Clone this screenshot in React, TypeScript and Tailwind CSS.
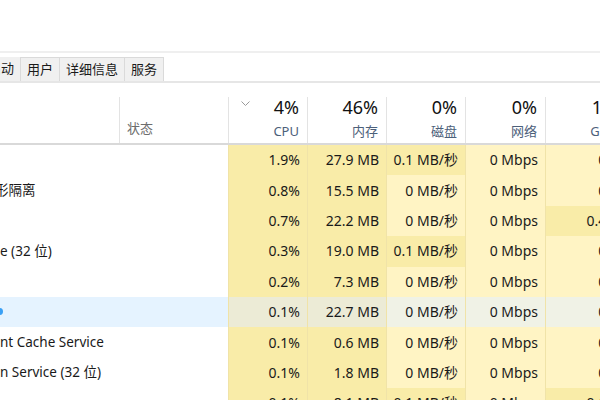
import React from "react";

type Row = {
  name: React.ReactNode;
  cpu: string;
  mem: string;
  disk: string;
  diskHot?: boolean;
  net: string;
  gpu: string;
  gpuHot?: boolean;
  hover?: boolean;
};

const rows: Row[] = [
  { name: "", cpu: "1.9%", mem: "27.9 MB", disk: "0.1 MB/秒", diskHot: true, net: "0 Mbps", gpu: "0%" },
  { name: <span className="-ml-[5px]">形隔离</span>, cpu: "0.8%", mem: "15.5 MB", disk: "0 MB/秒", net: "0 Mbps", gpu: "0%" },
  { name: "", cpu: "0.7%", mem: "22.2 MB", disk: "0 MB/秒", net: "0 Mbps", gpu: "0.4%", gpuHot: true },
  { name: "e (32 位)", cpu: "0.3%", mem: "19.0 MB", disk: "0.1 MB/秒", diskHot: true, net: "0 Mbps", gpu: "0%" },
  { name: "", cpu: "0.2%", mem: "7.3 MB", disk: "0 MB/秒", net: "0 Mbps", gpu: "0%" },
  {
    name: <span className="-ml-[5px] block h-[7px] w-[8px] rounded-full bg-[#3aa0f5]" />,
    cpu: "0.1%",
    mem: "22.7 MB",
    disk: "0 MB/秒",
    net: "0 Mbps",
    gpu: "0%",
    hover: true,
  },
  { name: "nt Cache Service", cpu: "0.1%", mem: "0.6 MB", disk: "0 MB/秒", net: "0 Mbps", gpu: "0%" },
  { name: "n Service (32 位)", cpu: "0.1%", mem: "1.8 MB", disk: "0 MB/秒", net: "0 Mbps", gpu: "0%" },
  { name: "", cpu: "0.1%", mem: "8.1 MB", disk: "0.1 MB/秒", diskHot: true, net: "0 Mbps", gpu: "0.1%", gpuHot: true },
];

const cols = "grid grid-cols-[119px_109px_79px_79px_79px_80px_80px]";
const cell = "flex items-center justify-end pr-[7px] pb-[1px] border-l border-[#f0e3a8]";

function heat(hot: boolean, hover?: boolean) {
  if (hover) return hot ? "bg-[#ecebd6]" : "bg-[#f0f2e6]";
  return hot ? "bg-[#f9eca8]" : "bg-[#fff4c4]";
}

function Chevron() {
  return (
    <svg width="9" height="5" viewBox="0 0 9 5" className="mt-[4px] ml-[12px]">
      <path d="M0.5 0.5 L4.5 4.5 L8.5 0.5" fill="none" stroke="#9a9a9a" strokeWidth="1" />
    </svg>
  );
}

function HeadCol({ pct, label, chevron }: { pct: string; label: string; chevron?: boolean }) {
  return (
    <div className="h-[60px] pt-[14px]">
      <div className="flex h-full flex-col border-l border-[#e3e3e3] pr-[8px]">
        <div className="flex items-start justify-between">
          {chevron ? <Chevron /> : <span />}
          <span className="text-[18px] leading-[21px] text-[#111]">{pct}</span>
        </div>
        <span className="mt-[5px] self-end text-[13px] leading-[16px] text-[#4c607a]">{label}</span>
      </div>
    </div>
  );
}

export default function App() {
  return (
    <div
      className="h-[400px] w-[600px] overflow-hidden bg-white text-[#1a1a1a]"
      style={{ fontFamily: '"Noto Sans", "Noto Sans CJK SC", sans-serif' }}
    >
      <div className="h-[51px]" />
      <div className="h-[2px] bg-[#efefef]" />
      <div className="h-[4px]" />
      <div className="flex h-[24px] text-[13px]">
        {["启动", "用户", "详细信息", "服务"].map((t, i) => (
          <div
            key={t}
            className={
              i === 0
                ? "-ml-[14px] flex items-center border-r border-[#dadada] bg-[#f0f0f0] pl-[2px] pr-[6px]"
                : "flex items-center border-r border-t border-[#dadada] bg-[#f0f0f0] px-[6px]"
            }
          >
            {t}
          </div>
        ))}
      </div>
      <div className="h-[2px] bg-[#e6e6e6]" />

      <div className="w-[625px]">
        <div className={`${cols} border-b-2 border-[#d9d9d9]`}>
          <div />
          <div className="h-[60px] pt-[14px]">
            <div className="flex h-full flex-col justify-end border-l border-[#e3e3e3] pb-[7px] pl-[7px]">
              <span className="text-[13px] leading-[16px] text-[#6d6d6d]">状态</span>
            </div>
          </div>
          <HeadCol pct="4%" label="CPU" chevron />
          <HeadCol pct="46%" label="内存" />
          <HeadCol pct="0%" label="磁盘" />
          <HeadCol pct="0%" label="网络" />
          <HeadCol pct="1%" label="GPU" />
        </div>

        {rows.map((r, i) => (
          <div key={i} className={`${cols} h-[30.4px] text-[14px]`}>
            <div
              className={`flex items-center overflow-hidden whitespace-nowrap pb-[1px] text-[13.5px] ${r.hover ? "bg-[#e5f3ff]" : ""}`}
            >
              {r.name}
            </div>
            <div className={r.hover ? "bg-[#e5f3ff]" : ""} />
            <div className={`${cell} ${heat(true, r.hover)}`}>{r.cpu}</div>
            <div className={`${cell} ${heat(true, r.hover)}`}>{r.mem}</div>
            <div className={`${cell} ${heat(!!r.diskHot, r.hover)}`}>{r.disk}</div>
            <div className={`${cell} ${heat(false, r.hover)}`}>{r.net}</div>
            <div className={`${cell} ${heat(!!r.gpuHot, r.hover)}`}>{r.gpu}</div>
          </div>
        ))}
      </div>
    </div>
  );
}
